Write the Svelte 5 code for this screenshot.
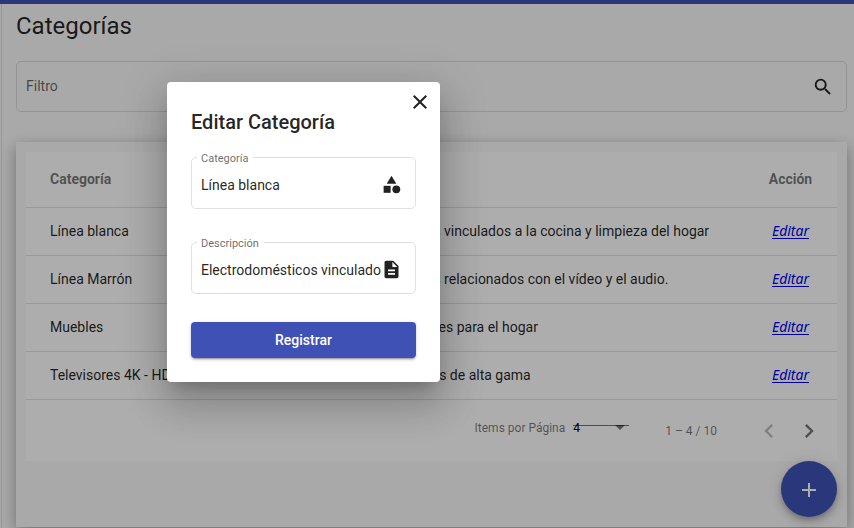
<script>
  const rows = [
    { name: 'Línea blanca', text: 'Electrodomésticos vinculados a la cocina y limpieza del hogar' },
    { name: 'Línea Marrón', text: 'Electrodomésticos relacionados con el vídeo y el audio.' },
    { name: 'Muebles', text: 'Muebles funcionales para el hogar' },
    { name: 'Televisores 4K - HD', text: 'Televisores móviles de alta gama' }
  ];
  let filter = $state('');
  let pageSize = $state('4');
  let category = $state('Línea blanca');
  let description = $state('Electrodomésticos vinculados a la cocina y limpieza del hogar');
</script>

<div class="page">
  <div class="toolbar"></div>
  <main>
    <h1>Categorías</h1>

    <div class="filter">
      <input type="text" aria-label="Filtro" placeholder="Filtro" bind:value={filter} />
      <svg width="22" height="22" viewBox="0 0 24 24" aria-hidden="true"><path d="M15.5 14h-.79l-.28-.27A6.471 6.471 0 0 0 16 9.5 6.5 6.5 0 1 0 9.5 16c1.61 0 3.09-.59 4.23-1.57l.27.28v.79l5 4.99L20.49 19l-4.99-5zm-6 0C7.01 14 5 11.99 5 9.5S7.01 5 9.5 5 14 7.01 14 9.5 11.99 14 9.5 14z" /></svg>
    </div>

    <section class="card">
      <table>
        <thead>
          <tr><th class="name">Categoría</th><th>Descripción</th><th class="action">Acción</th></tr>
        </thead>
        <tbody>
          {#each rows as row}
            <tr>
              <td class="name">{row.name}</td>
              <td>{row.text}</td>
              <td class="action"><a href="#editar">Editar</a></td>
            </tr>
          {/each}
        </tbody>
      </table>

      <div class="paginator">
        <label for="size">Items por Página</label>
        <div class="size">
          <select id="size" bind:value={pageSize}>
            <option>4</option>
            <option>8</option>
            <option>10</option>
          </select>
          <svg width="10" height="5" viewBox="0 0 10 5" aria-hidden="true"><path d="M0 0h10L5 5z" /></svg>
        </div>
        <span class="range">1 – 4 / 10</span>
        <button type="button" disabled aria-label="Página anterior">
          <svg width="28" height="28" viewBox="0 0 24 24"><path d="M15.41 7.41L14 6l-6 6 6 6 1.41-1.41L10.83 12z" /></svg>
        </button>
        <button type="button" aria-label="Página siguiente">
          <svg width="28" height="28" viewBox="0 0 24 24"><path d="M10 6L8.59 7.41 13.17 12l-4.58 4.59L10 18l6-6z" /></svg>
        </button>
      </div>

      <button type="button" class="fab" aria-label="Agregar">
        <svg width="24" height="24" viewBox="0 0 24 24"><path d="M19 13h-6v6h-2v-6H5v-2h6V5h2v6h6v2z" /></svg>
      </button>
    </section>
  </main>

  <div class="backdrop"></div>

  <form class="dialog" role="dialog" aria-labelledby="dialog-title">
    <button type="button" class="close" aria-label="Cerrar">
      <svg width="24" height="24" viewBox="0 0 24 24"><path d="M19 6.41L17.59 5 12 10.59 6.41 5 5 6.41 10.59 12 5 17.59 6.41 19 12 13.41 17.59 19 19 17.59 13.41 12z" /></svg>
    </button>
    <h2 id="dialog-title">Editar Categoría</h2>
    <div class="field">
      <label for="category">Categoría</label>
      <input id="category" type="text" bind:value={category} />
      <svg width="21" height="21" viewBox="0 0 24 24" aria-hidden="true"><path d="M12 2l-5.5 9h11z" /><circle cx="17.5" cy="17.5" r="4.5" /><path d="M3 13.5h8v8H3z" /></svg>
    </div>
    <div class="field">
      <label for="description">Descripción</label>
      <input id="description" type="text" bind:value={description} />
      <svg width="21" height="21" viewBox="0 0 24 24" aria-hidden="true"><path d="M14 2H6c-1.1 0-1.99.9-1.99 2L4 20c0 1.1.89 2 1.99 2H18c1.1 0 2-.9 2-2V8l-6-6zm2 16H8v-2h8v2zm0-4H8v-2h8v2zm-3-5V3.5L18.500 9H13z" /></svg>
    </div>
    <button type="button" class="submit">Registrar</button>
  </form>
</div>

<style>
  :global(body) {
    background: #fafafa;
  }
  .page {
    position: relative;
    min-height: 100vh;
    overflow: hidden;
    font-family: Roboto, 'Liberation Sans', sans-serif;
    font-size: 14px;
    color: rgba(0, 0, 0, 0.87);
  }
  svg {
    display: block;
    flex: none;
    fill: currentColor;
  }
  input,
  select,
  button {
    font: inherit;
    color: inherit;
    border: 0;
    padding: 0;
    margin: 0;
    background: none;
    outline: 0;
  }
  button {
    cursor: pointer;
  }
  .toolbar {
    height: 4px;
    background: #3f51b5;
  }
  main {
    margin-left: 1px;
    border-left: 1px solid #e0e0e0;
    padding: 6px 7px 1px 14px;
  }
  h1 {
    margin: 0 0 19px;
    font-size: 24px;
    font-weight: 400;
    line-height: 32px;
  }
  .filter {
    display: flex;
    align-items: center;
    box-sizing: border-box;
    height: 51px;
    padding: 0 12px 0 9px;
    border: 1px solid rgba(0, 0, 0, 0.12);
    border-radius: 5px;
  }
  .filter input {
    flex: 1;
    min-width: 0;
    padding-bottom: 2px;
  }
  .filter input::placeholder {
    color: rgba(0, 0, 0, 0.6);
    opacity: 1;
  }
  .card {
    display: flex;
    flex-direction: column;
    margin-top: 30px;
    padding: 10px;
    background: #fafafa;
    box-shadow: 0 5px 15px rgba(0, 0, 0, 0.35);
  }
  table {
    width: 100%;
    border-collapse: separate;
    border-spacing: 0;
    background: #fff;
  }
  th,
  td {
    box-sizing: border-box;
    height: 48px;
    padding: 0 0 2px;
    border-bottom: 1px solid rgba(0, 0, 0, 0.12);
    text-align: left;
    white-space: nowrap;
  }
  th {
    height: 56px;
    font-weight: 700;
    color: rgba(0, 0, 0, 0.54);
  }
  .name {
    width: 298px;
    padding-left: 24px;
  }
  .action {
    width: 69px;
    padding-right: 24px;
    text-align: center;
  }
  td a {
    font: italic 14px/16px 'Noto Sans', 'Open Sans', sans-serif;
    color: #0000ee;
    text-underline-offset: 2px;
  }
  .paginator {
    display: flex;
    align-items: center;
    justify-content: flex-end;
    height: 61px;
    padding-right: 8px;
    background: #fff;
    font-size: 12px;
    color: rgba(0, 0, 0, 0.54);
  }
  .paginator > label {
    margin: 0 8px 6px 0;
  }
  .size {
    position: relative;
    width: 56px;
    margin-bottom: 6px;
    color: rgba(0, 0, 0, 0.54);
  }
  .size::before {
    content: '';
    position: absolute;
    left: 0;
    right: 0;
    top: 4px;
    border-top: 1px solid currentColor;
  }
  .size svg {
    position: absolute;
    right: 4px;
    top: 4px;
  }
  select {
    display: block;
    width: 100%;
    appearance: none;
    color: #000;
  }
  .range {
    margin: 0 32px 0 36px;
  }
  .paginator button {
    display: grid;
    place-items: center;
    width: 40px;
    height: 40px;
  }
  .paginator button:disabled {
    color: rgba(0, 0, 0, 0.26);
  }
  .fab {
    display: grid;
    place-items: center;
    align-self: flex-end;
    width: 56px;
    height: 56px;
    padding-top: 2px;
    border-radius: 50%;
    background: #3f51b5;
    color: #fff;
    box-shadow: 0 3px 5px -1px rgba(0, 0, 0, 0.2), 0 6px 10px 0 rgba(0, 0, 0, 0.14),
      0 1px 18px 0 rgba(0, 0, 0, 0.12);
  }
  .backdrop {
    position: absolute;
    inset: 0;
    background: rgba(0, 0, 0, 0.32);
  }
  .dialog {
    position: absolute;
    left: 167px;
    top: 82px;
    display: flex;
    flex-direction: column;
    box-sizing: border-box;
    width: 273px;
    padding: 24px;
    border-radius: 4px;
    background: #fff;
    box-shadow: 0 11px 15px -7px rgba(0, 0, 0, 0.2), 0 24px 38px 3px rgba(0, 0, 0, 0.14),
      0 9px 46px 8px rgba(0, 0, 0, 0.12);
  }
  .close {
    position: absolute;
    top: 8px;
    right: 8px;
  }
  h2 {
    margin: 0 0 19px;
    font-size: 20px;
    font-weight: 500;
    line-height: 32px;
  }
  .field {
    position: relative;
    display: flex;
    align-items: center;
    box-sizing: border-box;
    height: 52px;
    margin-bottom: 33px;
    padding: 2px 13px 0 9px;
    border: 1px solid rgba(0, 0, 0, 0.12);
    border-radius: 5px;
  }
  .field label {
    position: absolute;
    left: 5px;
    top: -6px;
    padding: 0 5px 0 4px;
    background: #fff;
    font-size: 11px;
    line-height: 14px;
    color: rgba(0, 0, 0, 0.6);
  }
  .field input {
    flex: 1;
    min-width: 0;
    padding-top: 2px;
  }
  .submit {
    height: 36px;
    margin-top: -5px;
    border-radius: 4px;
    background: #3f51b5;
    color: #fff;
    font-weight: 500;
    box-shadow: 0 3px 1px -2px rgba(0, 0, 0, 0.2), 0 2px 2px 0 rgba(0, 0, 0, 0.14),
      0 1px 5px 0 rgba(0, 0, 0, 0.12);
  }
</style>
